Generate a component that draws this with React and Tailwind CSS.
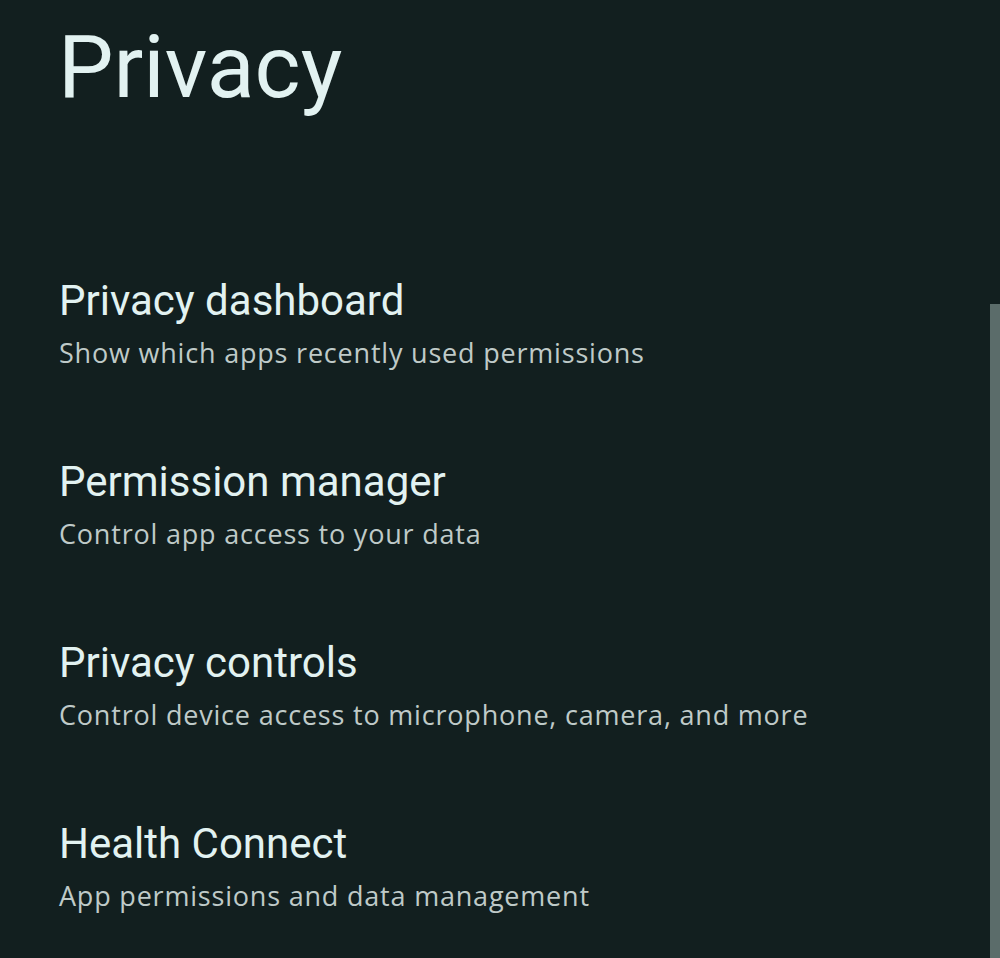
import React from 'react'

const items = [
    { title: 'Privacy dashboard', sub: 'Show which apps recently used permissions' },
    { title: 'Permission manager', sub: 'Control app access to your data' },
    { title: 'Privacy controls', sub: 'Control device access to microphone, camera, and more' },
    { title: 'Health Connect', sub: 'App permissions and data management' },
]

export default function App() {
    return (
        <div className="relative w-[1000px] h-[958px] overflow-hidden bg-[#121f1f] font-['Roboto',sans-serif]">
            <div className="pl-[58px] pt-[12px]">
                <h1 className="text-[88px] leading-[110px] text-[#e2f2f1] font-normal">Privacy</h1>
            </div>
            <div className="mt-[155px] flex flex-col">
                {items.map((item) => (
                    <div key={item.title} className="pl-[59px] h-[181px]">
                        <div className="text-[42px] leading-[48px] text-[#e2f2f1]">{item.title}</div>
                        <div className="font-['Open_Sans',sans-serif] text-[27px] leading-[34px] tracking-[0.8px] text-[#bfcac8] mt-[11px]">{item.sub}</div>
                    </div>
                ))}
            </div>
            {/* scrollbar */}
            <div className="absolute right-0 top-[304px] bottom-0 w-[10px] bg-[#5b6c6a]" />
        </div>
    )
}
